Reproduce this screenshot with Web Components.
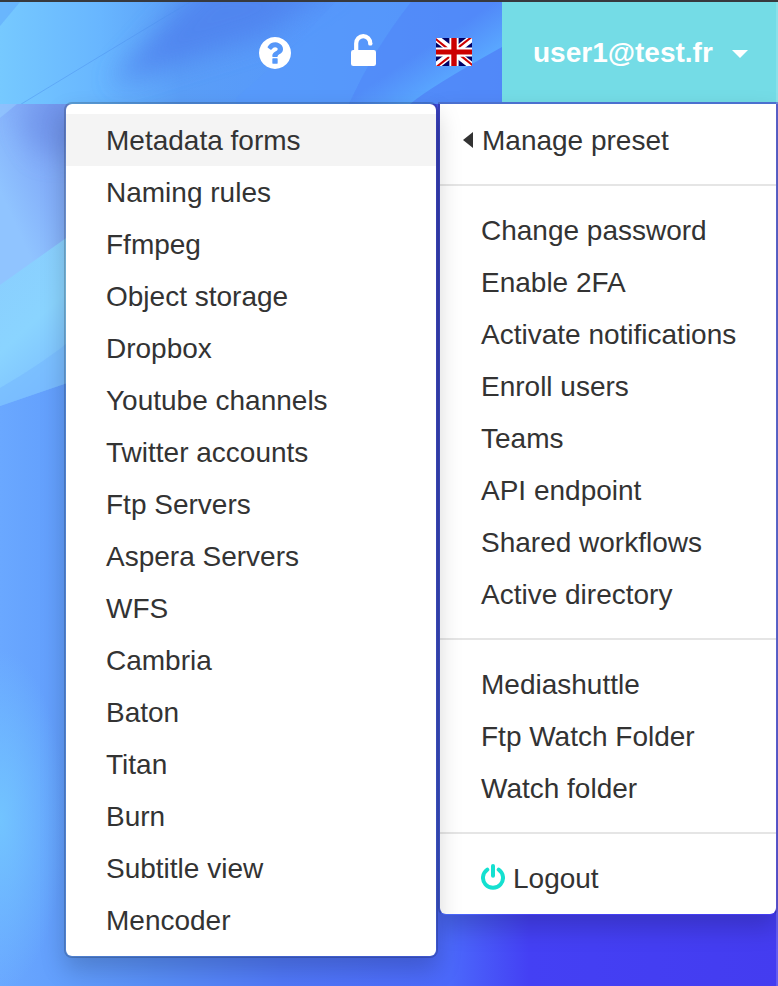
<!DOCTYPE html>
<html lang="en">
<head>
<meta charset="utf-8">
<title>Account menu</title>
<style>
html,body{margin:0;height:100%;overflow:hidden}
body{font-family:"Liberation Sans",Arial,sans-serif;font-size:28px;line-height:40px;color:#333}
</style>
</head>
<body>
<app-shell></app-shell>
<script>
const define = (name, html) => customElements.define(name, class extends HTMLElement {
  constructor() {
    super();
    this.attachShadow({mode: 'open'}).innerHTML = html;
  }
});

define('page-backdrop', `
<style>:host{display:block;position:absolute;inset:0}svg{display:block}</style>
<svg width="778" height="986" viewBox="0 0 778 986">
  <defs>
    <linearGradient id="base"><stop offset="0" stop-color="#6aa8ff"/><stop offset=".09" stop-color="#619dfc"/><stop offset=".2" stop-color="#588ef8"/><stop offset=".36" stop-color="#5078f8"/><stop offset=".58" stop-color="#4b68fb"/><stop offset=".68" stop-color="#4440f4"/><stop offset="1" stop-color="#443cf0"/></linearGradient>
    <linearGradient id="side" x1="0" y1="0" x2="0" y2="1"><stop offset="0" stop-color="#4650e8"/><stop offset=".6" stop-color="#4a5cee"/><stop offset="1" stop-color="#4a5cee" stop-opacity="0"/></linearGradient>
    <linearGradient id="upper" gradientUnits="userSpaceOnUse" x1="-5" y1="180" x2="72" y2="145"><stop offset="0" stop-color="#90c4ff"/><stop offset=".5" stop-color="#84b0fa"/><stop offset="1" stop-color="#7aa0f2"/></linearGradient>
    <linearGradient id="cyan" x1="0" y1="0" x2=".4" y2="1"><stop offset="0" stop-color="#89ccfe"/><stop offset=".6" stop-color="#8ad4ff"/><stop offset="1" stop-color="#7cc0ff"/></linearGradient>
    <radialGradient id="glow"><stop offset="0" stop-color="#72c4ff"/><stop offset="1" stop-color="#72c4ff" stop-opacity="0"/></radialGradient>
    <linearGradient id="head" gradientUnits="userSpaceOnUse" x1="0" y1="60" x2="502" y2="60"><stop offset="0" stop-color="#76c9ff"/><stop offset=".2" stop-color="#68b6ff"/><stop offset=".36" stop-color="#5a9ef7"/><stop offset=".62" stop-color="#5698fb"/><stop offset="1" stop-color="#528bfb"/></linearGradient>
    <linearGradient id="ray" gradientUnits="userSpaceOnUse" x1="458" y1="74" x2="436" y2="41"><stop offset="0" stop-color="#59a6ff"/><stop offset="1" stop-color="#59a6ff" stop-opacity="0"/></linearGradient>
    <filter id="soft" x="-30%" y="-60%" width="160%" height="220%"><feGaussianBlur stdDeviation="13"/></filter>
    <clipPath id="top"><path d="M0 2h778v102H0z"/></clipPath>
    <clipPath id="lower"><path d="M0 104h778v882H0z"/></clipPath>
  </defs>
  <path fill="url(#base)" d="M0 0h778v986H0z"/>
  <path fill="url(#side)" d="M430 98h348v800H430z"/>
  <ellipse cx="0" cy="820" rx="65" ry="170" fill="url(#glow)"/>
  <g clip-path="url(#lower)">
    <path fill="url(#upper)" d="M0 104h76v128L0 286z"/>
    <path fill="#6888e2" opacity=".55" d="M50 95h40v60H40L20 120z" filter="url(#soft)"/>
    <path fill="#98d0ff" opacity=".5" d="M0 104h17L0 118z"/>
    <path fill="url(#cyan)" d="M0 285l76-54v149L0 406z"/>
    <path fill="#73b6ff" opacity=".5" d="M0 388q45-26 76-52v44L0 406z"/>
  </g>
  <g clip-path="url(#top)">
    <path fill="url(#head)" d="M0 0h778v104H0z"/>
    <path fill="#64aefc" opacity=".7" d="M0 2h20L0 26z"/>
    <path fill="#4f82ee" opacity=".85" d="M205 -20H345L265 36 110 84Z" filter="url(#soft)"/>
    <path fill="#569afb" opacity=".6" d="M335 2h76q-40 52-62 102H236V98Q285 58 335 2z"/>
    <path fill="#4f85f8" opacity=".5" d="M411 2h91v102H349q25-55 62-102z"/>
    <path fill="url(#ray)" d="M502 0v47q-72 40-92 57h-61q25-55 62-102z"/>
    <path fill="none" stroke="#4b8fed" stroke-opacity=".45" d="M0 117Q90 62 190 2"/>
  </g>
  <path fill="#37393e" d="M0 0h778v2H0z"/>
</svg>`);

define('icon-help', `
<style>:host{display:block;width:32px;height:32px}svg{display:block}</style>
<svg width="32" height="32" viewBox="128 128 1536 1536"><path fill="#fff" d="M1024 1376v-192q0-14-9-23t-23-9h-192q-14 0-23 9t-9 23v192q0 14 9 23t23 9h192q14 0 23-9t9-23zm256-672q0-88-55.500-163t-138.500-116-170-41q-243 0-371 213-15 24 8 42l132 100q7 6 19 6 16 0 25-12 53-68 86-92 34-24 86-24 48 0 85.500 26t37.500 59q0 38-20 61t-68 45q-63 28-115.500 86.500t-52.500 125.500v36q0 14 9 23t23 9h192q14 0 23-9t9-23q0-19 21.500-49.500t54.500-49.500q32-18 49-28.500t46-35 44.500-48 28-60.500 12.500-81zm384 192q0 209-103 385.500t-279.500 279.500-385.500 103-385.500-103-279.500-279.500-103-385.500 103-385.500 279.500-279.500 385.500-103 385.500 103 279.500 279.500 103 385.500z"/></svg>`);

define('icon-unlock', `
<style>:host{display:block;width:25px;height:32px}svg{display:block}</style>
<svg width="25" height="32" viewBox="0 0 25 32"><rect y="16" width="25" height="16" rx="2.300" fill="#fff"/><path d="M5.200 18V9.500a7.050 7.400 0 0 1 14.100 0" fill="none" stroke="#fff" stroke-width="4.200"/><path d="M17.200 9h4.200v1q0 1.600-1.600 1.600h-1q-1.600 0-1.600-1.600z" fill="#fff"/></svg>`);

define('icon-flag', `
<style>:host{display:block;width:36px;height:28px}svg{display:block}</style>
<svg width="36" height="28" viewBox="0 0 36 28"><path fill="#006" d="M0 0h36v28H0z"/><path stroke="#fff" stroke-width="7" d="M0 0l36 28M36 0L0 28"/><path fill="#c00" d="M0 0l12 9.400H8.500L0 2.600zM36 0L24 9.400h-3.500L32.700 0zM0 28l12-9.400h3.500L3.300 28zM36 28l-12-9.400h3.500L36 25.400z"/><path fill="#fff" d="M13.400 0h9.200v28h-9.200zM0 9.400h36v9.200H0z"/><path fill="#c00" d="M15.300 0h5.400v28h-5.400zM0 11.600h36v4.800H0z"/></svg>`);

define('icon-power', `
<style>:host{display:block;width:24px;height:26px}svg{display:block}</style>
<svg width="24" height="26" viewBox="0 0 24 26" fill="none" stroke="#14e0d0" stroke-width="4" stroke-linecap="round"><path d="M6.300 5.600A10 10 0 1 0 17.700 5.600"/><path d="M12 2v9.700"/></svg>`);

define('user-button', `
<style>:host{display:flex;align-items:center;gap:19px;box-sizing:border-box;width:276px;height:100px;padding-left:31px;background:#74dce6;color:#fff;font-weight:700}
span{padding-top:2px}
i{width:0;height:0;margin-top:3px;border:8px solid transparent;border-top-color:#fff;border-bottom:0}</style>
<span><slot></slot></span><i></i>`);

define('top-bar', `
<style>:host{display:flex;position:relative;justify-content:flex-end;align-items:center;height:100px;padding-top:2px}
nav{display:flex;align-items:center;width:243px}
icon-help{margin-top:1px}icon-unlock{margin-left:60px;margin-top:-4px}icon-flag{margin-left:60px}</style>
<nav><icon-help></icon-help><icon-unlock></icon-unlock><icon-flag></icon-flag></nav>
<user-button>user1@test.fr</user-button>`);

define('menu-panel', `
<style>:host{display:block;position:absolute;box-sizing:border-box;background:#fff;background-clip:padding-box;border:2px solid rgba(0,0,0,.18);border-radius:8px;padding:10px 0;box-shadow:0 12px 24px rgba(0,0,0,.175)}</style>
<slot></slot>`);

define('menu-item', `
<style>:host{display:flex;align-items:center;box-sizing:border-box;height:52px;padding:7px 40px 5px;white-space:nowrap}
:host([active]){background:#f4f4f4}
:host([parent]){padding-left:22px;gap:9px}
:host([parent])::before{content:"";margin-top:-2px;border:8px solid transparent;border-right:10px solid #333;border-left:0}
::slotted(icon-power){margin-right:8px;margin-top:-4px}</style>
<slot name="icon"></slot><span><slot></slot></span>`);

define('menu-divider', `<style>:host{display:block;height:2px;margin:18px 0;background:#e5e5e5}</style>`);

const items = names => names.map(n => `<menu-item>${n}</menu-item>`).join('');
define('app-shell', `
<style>:host{display:block;position:relative;width:778px;height:986px;overflow:hidden}
.account{left:438px;top:102px;width:340px;border-top-color:#4b70cf;border-bottom-color:transparent;border-radius:0 0 8px 8px}
.account menu-item{margin-left:1px}
.presets{left:64px;top:102px;width:374px}
.edge{position:absolute;top:2px;right:0;bottom:0;width:2px;background:rgba(255,255,255,.16)}</style>
<page-backdrop></page-backdrop>
<top-bar></top-bar>
<menu-panel class="account">
  <menu-item parent>Manage preset</menu-item>
  <menu-divider></menu-divider>
  ${items(['Change password','Enable 2FA','Activate notifications','Enroll users','Teams','API endpoint','Shared workflows','Active directory'])}
  <menu-divider></menu-divider>
  ${items(['Mediashuttle','Ftp Watch Folder','Watch folder'])}
  <menu-divider></menu-divider>
  <menu-item><icon-power slot="icon"></icon-power>Logout</menu-item>
</menu-panel>
<menu-panel class="presets">
  <menu-item active>Metadata forms</menu-item>
  ${items(['Naming rules','Ffmpeg','Object storage','Dropbox','Youtube channels','Twitter accounts','Ftp Servers','Aspera Servers','WFS','Cambria','Baton','Titan','Burn','Subtitle view','Mencoder'])}
</menu-panel>
<div class="edge"></div>`);
</script>
</body>
</html>
